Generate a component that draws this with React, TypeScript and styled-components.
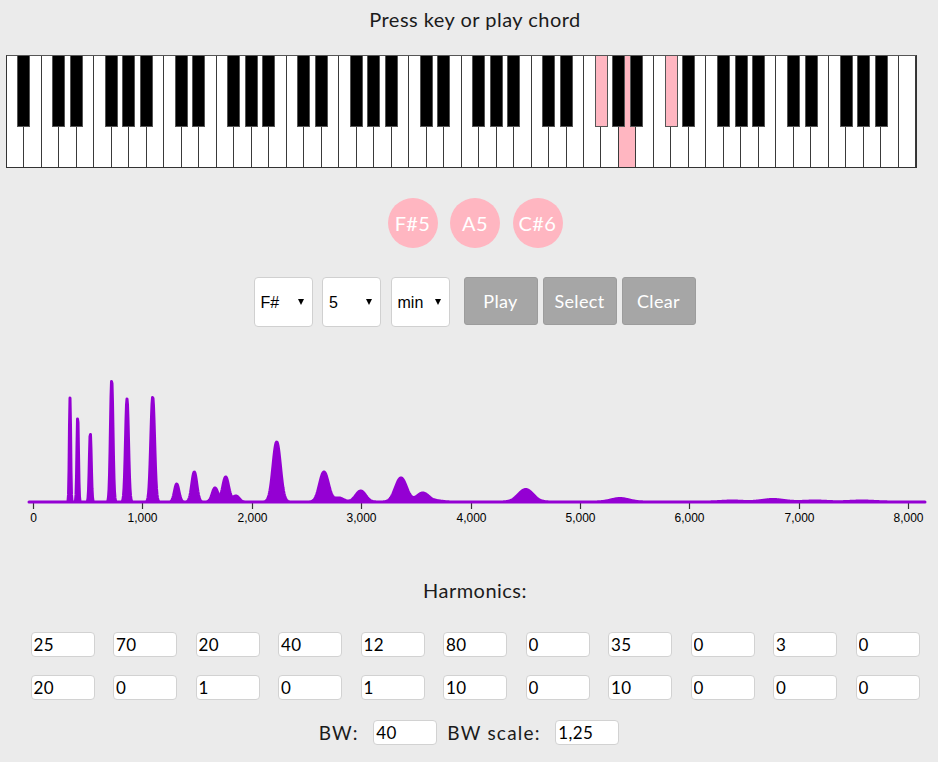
import { useMemo } from 'react'
import styled, { createGlobalStyle } from 'styled-components'

const GlobalStyle = createGlobalStyle`
  html, body {
    margin: 0;
    padding: 0;
    background: #ebebeb;
    overflow: hidden;
  }
  body {
    font-family: Lato, 'Open Sans', sans-serif;
    letter-spacing: 0.03em;
    color: #1b1b1b;
  }
`

const PURPLE = '#9400d3'
const PINK = '#ffb6c1'
const KEY_W = 17.5
const FIRST_MIDI = 21
const LAST_MIDI = 108
const BLACK_PCS = [1, 3, 6, 8, 10]

const chordNotes = [
  { name: 'F#5', midi: 78 },
  { name: 'A5', midi: 81 },
  { name: 'C#6', midi: 85 },
]

const harmonics = [
  [25, 70, 20, 40, 12, 80, 0, 35, 0, 3, 0],
  [20, 0, 1, 0, 1, 10, 0, 10, 0, 0, 0],
]

// [x on page, height in px]
const peaks: [number, number][] = [
  [70, 104],
  [77.7, 86],
  [90.3, 69],
  [111.7, 122],
  [127, 103],
  [152.7, 105],
  [176.7, 18],
  [194.3, 30],
  [215, 14],
  [225.7, 25],
  [236, 6],
  [276.7, 60],
  [324, 30],
  [339, 4],
  [360.7, 11],
  [401, 24],
  [422.7, 9],
  [437, 1],
  [525.7, 12.5],
  [620, 3.5],
  [732, 1],
  [773, 2.5],
  [815, 1],
  [862, 1],
]

const AXIS_X0 = 33
const PX_PER_K = 109.4
const BASE_Y = 502

const Page = styled.div`
  width: 938px;
  height: 762px;
  padding-left: 12px;
  box-sizing: border-box;
  display: flex;
  flex-direction: column;
  align-items: center;
`

const Title = styled.div`
  font-size: 20px;
  line-height: 38px;
  height: 38px;
`

const Keyboard = styled.div`
  position: relative;
  align-self: flex-start;
  margin: 17px 0 0 -6px;
  width: 911px;
  height: 113px;
  box-sizing: border-box;
  display: flex;
  border: 1px solid #333;
  border-top-color: #555;
`

const WhiteKey = styled.div<{ $on: boolean }>`
  flex: 1;
  background: ${(p) => (p.$on ? PINK : '#fff')};
  border-right: 1px solid #3a3a3a;
  &:last-child {
    border-right: none;
  }
`

const BlackKey = styled.div<{ $on: boolean }>`
  position: absolute;
  top: -1px;
  width: 13px;
  height: 72px;
  box-sizing: border-box;
  background: ${(p) => (p.$on ? PINK : '#000')};
  border: 1px solid #555;
`

const ChordRow = styled.div`
  margin-top: 30px;
  display: flex;
  gap: 12.5px;
`

const NoteBadge = styled.div`
  width: 50px;
  height: 50px;
  border-radius: 50%;
  background: ${PINK};
  color: #fff;
  font-size: 20px;
  letter-spacing: 0.02em;
  display: flex;
  align-items: center;
  justify-content: center;
`

const Controls = styled.div`
  margin: 29px 0 0 4px;
  display: flex;
  align-items: flex-start;
`

const SelectWrap = styled.div`
  position: relative;
  margin-right: 9.5px;
  &:nth-child(3) {
    margin-right: 14px;
  }
`

const Select = styled.select`
  appearance: none;
  width: 59px;
  height: 50px;
  box-sizing: border-box;
  padding: 0 0 0 6px;
  border: 1px solid #d0d0d0;
  border-radius: 4px;
  background: #fff;
  font-family: 'Liberation Sans', Arial, sans-serif;
  font-size: 16px;
  letter-spacing: 0;
  color: #000;
`

const Arrow = styled.span`
  position: absolute;
  right: 9px;
  top: 22px;
  width: 0;
  height: 0;
  border-left: 3.5px solid transparent;
  border-right: 3.5px solid transparent;
  border-top: 6px solid #000;
  pointer-events: none;
`

const Button = styled.button`
  width: 74px;
  height: 48px;
  margin-right: 5px;
  box-sizing: border-box;
  background: #a6a6a6;
  border: 1px solid #9c9c9c;
  border-radius: 3px;
  color: #fff;
  font-family: Lato, sans-serif;
  font-size: 18px;
  letter-spacing: 0.02em;
  padding: 0;
`

const ChartBox = styled.div`
  align-self: flex-start;
  margin: 13px 0 0 -12px;
  height: 190px;
  svg {
    display: block;
  }
`

const SectionLabel = styled.div`
  margin-top: 48px;
  font-size: 20px;
  line-height: 24px;
`

const HarmonicGrid = styled.div`
  margin-top: 30px;
  display: grid;
  grid-template-columns: repeat(11, 64px);
  column-gap: 18.5px;
  row-gap: 18px;
`

const NumInput = styled.input`
  width: 64px;
  height: 25px;
  box-sizing: border-box;
  padding: 0 2px;
  border: 1px solid #d2d2d2;
  border-radius: 4px;
  background: #fff;
  font-family: Lato, sans-serif;
  font-size: 17px;
  letter-spacing: 0.02em;
  color: #000;
  outline: none;
`

const BwRow = styled.div`
  margin-top: 20px;
  margin-left: -12px;
  display: flex;
  align-items: center;
  font-size: 19px;
  letter-spacing: 0.065em;
`

const BwLabel = styled.span`
  margin-right: 14.5px;
`

const BwInput = styled(NumInput)`
  margin-right: 10px;
  &:last-child {
    margin-right: 0;
  }
`

function Piano() {
  const on = new Set(chordNotes.map((n) => n.midi))
  const whites: number[] = []
  const blacks: { midi: number; left: number }[] = []
  for (let m = FIRST_MIDI; m <= LAST_MIDI; m++) {
    if (BLACK_PCS.includes(m % 12)) {
      blacks.push({ midi: m, left: whites.length * KEY_W - 6.5 - 1 })
    } else {
      whites.push(m)
    }
  }
  return (
    <Keyboard>
      {whites.map((m) => (
        <WhiteKey key={m} $on={on.has(m)} />
      ))}
      {blacks.map((b) => (
        <BlackKey key={b.midi} $on={on.has(b.midi)} style={{ left: b.left }} />
      ))}
    </Keyboard>
  )
}

function Spectrum() {
  const path = useMemo(() => {
    const pts: string[] = [`M29,${BASE_Y}`]
    for (let x = 29; x <= 925; x += 0.5) {
      let h = 0
      for (const [c, a] of peaks) {
        const s = 0.1 + 0.0148 * (c - AXIS_X0)
        const d = (x - c) / s
        if (Math.abs(d) < 6) h += a * Math.exp(-0.5 * d * d)
      }
      pts.push(`L${x},${(BASE_Y - h).toFixed(2)}`)
    }
    pts.push(`L925,${BASE_Y}Z`)
    return pts.join('')
  }, [])

  const ticks = Array.from({ length: 9 }, (_, k) => k)

  return (
    <svg width={938} height={190} viewBox="0 340 938 190">
      <line x1={AXIS_X0} x2={925} y1={BASE_Y + 0.5} y2={BASE_Y + 0.5} stroke="#333" />
      {ticks.map((k) => {
        const x = Math.round(AXIS_X0 + k * PX_PER_K) + 0.5
        return (
          <g key={k}>
            <line x1={x} x2={x} y1={BASE_Y} y2={BASE_Y + 7} stroke="#333" strokeWidth={1.2} />
            <text
              x={x}
              y={522}
              textAnchor="middle"
              fontFamily="'Liberation Sans', Arial, sans-serif"
              fontSize={12}
              letterSpacing={0}
              fill="#000"
            >
              {k === 0 ? '0' : `${k},000`}
            </text>
          </g>
        )
      })}
      <path d={path} fill={PURPLE} stroke={PURPLE} strokeWidth={3} strokeLinejoin="round" />
    </svg>
  )
}

export default function App() {
  return (
    <>
      <GlobalStyle />
      <Page>
        <Title>Press key or play chord</Title>
        <Piano />
        <ChordRow>
          {chordNotes.map((n) => (
            <NoteBadge key={n.name}>{n.name}</NoteBadge>
          ))}
        </ChordRow>
        <Controls>
          <SelectWrap>
            <Select defaultValue="F#">
              <option>F#</option>
            </Select>
            <Arrow />
          </SelectWrap>
          <SelectWrap>
            <Select defaultValue="5">
              <option>5</option>
            </Select>
            <Arrow />
          </SelectWrap>
          <SelectWrap>
            <Select defaultValue="min">
              <option>min</option>
            </Select>
            <Arrow />
          </SelectWrap>
          <Button>Play</Button>
          <Button>Select</Button>
          <Button>Clear</Button>
        </Controls>
        <ChartBox>
          <Spectrum />
        </ChartBox>
        <SectionLabel>Harmonics:</SectionLabel>
        <HarmonicGrid>
          {harmonics.flat().map((v, i) => (
            <NumInput key={i} defaultValue={v} />
          ))}
        </HarmonicGrid>
        <BwRow>
          <BwLabel>BW:</BwLabel>
          <BwInput defaultValue="40" />
          <BwLabel>BW scale:</BwLabel>
          <BwInput defaultValue="1,25" />
        </BwRow>
      </Page>
    </>
  )
}
